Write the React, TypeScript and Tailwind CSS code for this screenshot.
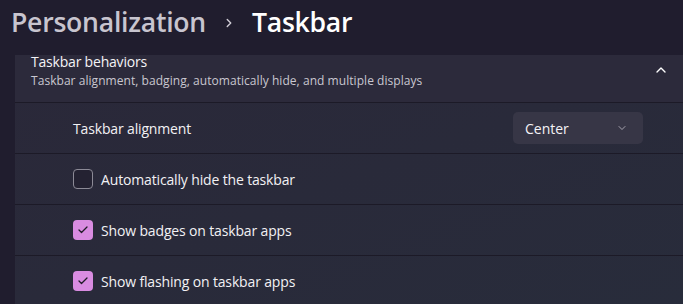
import { ChevronRight, ChevronUp, ChevronDown, Check } from "lucide-react";

const font = { fontFamily: '"Segoe UI", "Open Sans", "Noto Sans", sans-serif' };

function CheckRow({ label, checked }: { label: string; checked: boolean }) {
    return (
        <div className="h-[51px] flex items-center pl-[58px] border-t border-[#1c1a27]">
            {checked ? (
                <div className="w-5 h-5 rounded-[4px] bg-[#d98ce1] flex items-center justify-center">
                    <Check className="w-3 h-3 text-[#1f1b26]" strokeWidth={2.6} />
                </div>
            ) : (
                <div className="w-5 h-5 rounded-[4px] border border-[#8c8a96] bg-[#242232]" />
            )}
            <span className="ml-2 text-[14px] tracking-[-0.15px] text-[#f2f1f4]">{label}</span>
        </div>
    );
}

export default function App() {
    return (
        <div className="w-[683px] h-[304px] overflow-hidden bg-[#201d2e]" style={font}>
            <div className="h-[55px] flex items-center pl-[11px] pb-[9px]">
                <span className="text-[26.6px] font-semibold text-[#c8c5cf] tracking-[-0.25px]">Personalization</span>
                <ChevronRight className="w-[14px] h-[14px] mx-[16px] text-[#d0cdd6]" strokeWidth={2.4} />
                <span className="text-[26.6px] font-semibold text-white tracking-[-0.25px]">Taskbar</span>
            </div>
            <div className="ml-[15px] bg-gradient-to-br from-[#2a2839] to-[#282c3b]">
                <div className="h-[47px] bg-[#2c2a3b] flex items-start justify-between pl-4 pr-[14px]">
                    <div className="flex flex-col -mt-[2px]">
                        <span className="text-[14px] leading-[18px] tracking-[-0.2px] text-[#f4f3f6]">Taskbar behaviors</span>
                        <span className="text-[12px] leading-[16px] mt-[2px] tracking-[0.05px] text-[#c9c7d0]">Taskbar alignment, badging, automatically hide, and multiple displays</span>
                    </div>
                    <ChevronUp className="w-4 h-4 mt-[7px] text-white" strokeWidth={2} />
                </div>
                <div className="h-[51px] flex items-center justify-between pl-[58px] pr-[40px] border-t border-[#1c1a27]">
                    <span className="text-[14px] tracking-[-0.15px] text-[#f2f1f4]">Taskbar alignment</span>
                    <div className="w-[130px] h-8 rounded-[5px] bg-[#373646] flex items-center justify-between pl-3 pr-[15px]">
                        <span className="text-[14px] text-[#f4f3f6]">Center</span>
                        <ChevronDown className="w-3 h-3 text-[#c9c7d0]" strokeWidth={1.5} />
                    </div>
                </div>
                <CheckRow label="Automatically hide the taskbar" checked={false} />
                <CheckRow label="Show badges on taskbar apps" checked={true} />
                <CheckRow label="Show flashing on taskbar apps" checked={true} />
            </div>
        </div>
    );
}
